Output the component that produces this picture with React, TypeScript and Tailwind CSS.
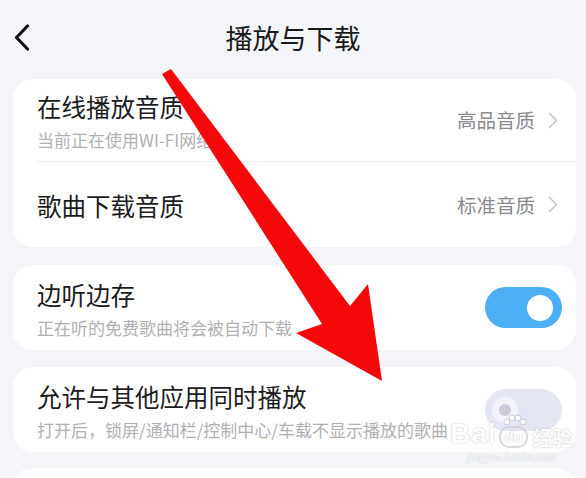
import React from "react";

function Chevron() {
  return (
    <svg width="10" height="17" viewBox="0 0 10 17" fill="none">
      <path d="M1.5 1.5L8.5 8.5L1.5 15.5" stroke="#c8c8cc" strokeWidth="1.6" strokeLinecap="round" strokeLinejoin="round" />
    </svg>
  );
}

function Toggle({ on }: { on: boolean }) {
  if (on) {
    return (
      <div className="w-[77px] h-[41px] rounded-full bg-[#4caef5] flex items-center justify-end pr-[9px]">
        <div className="w-[26px] h-[26px] rounded-full bg-white" />
      </div>
    );
  }
  return (
    <div className="w-[77px] h-[42px] rounded-full bg-[#e5e6f4] flex items-center pl-[7px]">
      <div className="w-[26px] h-[26px] rounded-full bg-[#f3f3fb] flex items-center justify-center">
        <div className="w-[12px] h-[12px] rounded-full bg-[#cbcbdc]" />
      </div>
    </div>
  );
}

function TextBlock({ title, sub }: { title: string; sub?: string }) {
  return (
    <div className="flex flex-col gap-[7px] pt-[3px] min-w-0">
      <div className="text-[24.5px] leading-[30px] text-[#1c1c1e] whitespace-nowrap">{title}</div>
      {sub && <div className="text-[17px] leading-[22px] text-[#b0b0b4] whitespace-nowrap">{sub}</div>}
    </div>
  );
}

export default function App() {
  return (
    <div className="relative w-[586px] h-[478px] overflow-hidden bg-[#f4f5f9] font-['Noto_Sans_CJK_SC','Noto_Sans',sans-serif]">
      {/* Header */}
      <div className="grid grid-cols-[60px_1fr_60px] items-center h-[79px] pb-[4px]">
        <div className="pl-[14px]">
          <svg width="16" height="27" viewBox="0 0 16 27" fill="none">
            <path d="M13.5 2L2.5 13.5L13.5 25" stroke="#111" strokeWidth="3.2" strokeLinecap="round" strokeLinejoin="round" />
          </svg>
        </div>
        <div className="text-center text-[27px] leading-[32px] text-[#1a1a1a]">播放与下载</div>
        <div />
      </div>

      <div className="ml-[13px] mr-[10px] flex flex-col">
        {/* Card 1 */}
        <div className="bg-white rounded-[20px] overflow-hidden">
          <div className="pl-[24px]">
            <div className="h-[83px] flex items-center justify-between border-b border-[#efeff3] pr-[18px]">
              <TextBlock title="在线播放音质" sub="当前正在使用WI-FI网络" />
              <div className="flex items-center gap-[13px] text-[19.5px] text-[#8a8a8e]">
                <span>高品音质</span>
                <Chevron />
              </div>
            </div>
          </div>
          <div className="h-[85px] pl-[24px] pr-[18px] flex items-center justify-between">
            <TextBlock title="歌曲下载音质" />
            <div className="flex items-center gap-[13px] text-[19.5px] text-[#8a8a8e]">
              <span>标准音质</span>
              <Chevron />
            </div>
          </div>
        </div>

        {/* Card 2 */}
        <div className="mt-[18px] bg-white rounded-[20px] h-[85px] pl-[24px] pr-[14px] flex items-center justify-between">
          <TextBlock title="边听边存" sub="正在听的免费歌曲将会被自动下载" />
          <Toggle on />
        </div>

        {/* Card 3 */}
        <div className="mt-[17px] bg-white rounded-[20px] h-[85px] pl-[24px] pr-[14px] flex items-center justify-between">
          <TextBlock title="允许与其他应用同时播放" sub="打开后，锁屏/通知栏/控制中心/车载不显示播放的歌曲" />
          <Toggle on={false} />
        </div>

        {/* Card 4 */}
        <div className="mt-[16px] bg-white rounded-[20px] h-[85px]" />
      </div>

      {/* Red arrow overlay */}
      <svg className="absolute inset-0 pointer-events-none" width="586" height="478" viewBox="0 0 586 478">
        <polygon
          points="162,74 171,69 350,306 368,284 382,381 296,333 322,324"
          fill="#f5080a"
        />
      </svg>

      {/* Watermark */}
      <div className="absolute left-[450px] top-[414px] flex flex-col items-center text-white opacity-90 pointer-events-none">
        <div className="flex items-end gap-[2px] leading-none [text-shadow:0_0_1.5px_rgba(120,120,130,0.6)]">
          <span className="font-['Liberation_Sans',sans-serif] font-bold text-[28px] tracking-[1px]">Bai</span>
          <span className="relative flex flex-col items-center">
            <svg width="30" height="14" viewBox="0 0 30 14" className="mb-[-2px]">
              <circle cx="8" cy="8" r="3" fill="white" stroke="#c8c8d0" strokeWidth="1" />
              <circle cx="13" cy="4" r="3" fill="white" stroke="#c8c8d0" strokeWidth="1" />
              <circle cx="19" cy="4" r="3" fill="white" stroke="#c8c8d0" strokeWidth="1" />
              <circle cx="24" cy="8" r="3" fill="white" stroke="#c8c8d0" strokeWidth="1" />
            </svg>
            <span className="rounded-[10px] border-[2px] border-[#d2d2da] px-[3px] font-['Liberation_Sans',sans-serif] font-bold text-[15px] leading-[18px]">du</span>
          </span>
          <span className="text-[20px] ml-[2px] font-bold">经验</span>
        </div>
        <div className="mt-[3px] font-['Liberation_Serif',serif] text-[12px] leading-none text-white [text-shadow:0_0_1px_rgba(120,120,130,0.6)]">
          jingyan.baidu.com
        </div>
      </div>
    </div>
  );
}
